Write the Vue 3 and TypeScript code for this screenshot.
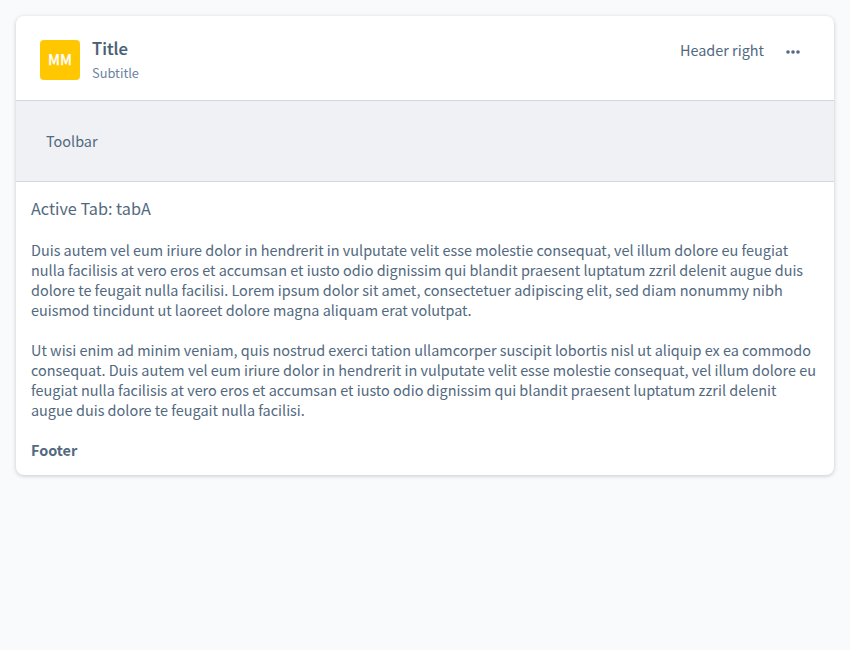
<script setup lang="ts">
import { ref } from 'vue'

const activeTab = ref<string>('tabA')
const paragraphs: string[] = [
  'Duis autem vel eum iriure dolor in hendrerit in vulputate velit esse molestie consequat, vel illum dolore eu feugiat nulla facilisis at vero eros et accumsan et iusto odio dignissim qui blandit praesent luptatum zzril delenit augue duis dolore te feugait nulla facilisi. Lorem ipsum dolor sit amet, consectetuer adipiscing elit, sed diam nonummy nibh euismod tincidunt ut laoreet dolore magna aliquam erat volutpat.',
  'Ut wisi enim ad minim veniam, quis nostrud exerci tation ullamcorper suscipit lobortis nisl ut aliquip ex ea commodo consequat. Duis autem vel eum iriure dolor in hendrerit in vulputate velit esse molestie consequat, vel illum dolore eu feugiat nulla facilisis at vero eros et accumsan et iusto odio dignissim qui blandit praesent luptatum zzril delenit augue duis dolore te feugait nulla facilisi.',
]
</script>

<template>
  <main class="page">
    <section class="card">
      <header class="header">
        <div class="avatar">MM</div>
        <div class="titles">
          <h2 class="title">Title</h2>
          <div class="subtitle">Subtitle</div>
        </div>
        <div class="right">Header right</div>
        <button class="menu" aria-label="More">
          <svg width="14" height="4" viewBox="0 0 14 4" fill="currentColor">
            <circle cx="2" cy="2" r="1.8" />
            <circle cx="7" cy="2" r="1.8" />
            <circle cx="12" cy="2" r="1.8" />
          </svg>
        </button>
      </header>
      <div class="toolbar">Toolbar</div>
      <div class="body">
        <h3 class="tab">Active Tab: {{ activeTab }}</h3>
        <p v-for="(text, i) in paragraphs" :key="i">{{ text }}</p>
        <strong class="footer">Footer</strong>
      </div>
    </section>
  </main>
</template>

<style>
body {
  background: #f9fafc;
}
</style>

<style scoped>
.page {
  padding: 16px;
  color: #526980;
  font: 400 14.43px/20px 'Noto Sans CJK SC', sans-serif;
}
.card {
  background: #fff;
  border-radius: 8px;
  overflow: hidden;
  box-shadow: 0 1px 4px rgba(0, 0, 0, 0.2);
}
.header {
  display: flex;
  box-sizing: border-box;
  height: 84px;
  padding: 24px 24px 0;
}
.avatar {
  box-sizing: border-box;
  width: 40px;
  height: 40px;
  border-radius: 4px;
  background: #ffc700;
  color: #fff;
  font-size: 14.5px;
  font-weight: 500;
  line-height: 38px;
  text-align: center;
  -webkit-text-stroke: 0.25px currentColor;
}
.titles {
  margin-left: 12px;
}
.title {
  margin: 0;
  color: #475e75;
  font-size: 16.6px;
  font-weight: 500;
  line-height: 17px;
  -webkit-text-stroke: 0.2px currentColor;
}
.subtitle {
  margin-top: 6px;
  color: #6c839f;
  font-size: 12.8px;
  line-height: 20px;
}
.right {
  margin-left: auto;
}
.menu {
  display: flex;
  justify-content: center;
  width: 26px;
  height: 24px;
  margin: 0 4px 0 16px;
  padding: 10px 0 0;
  border: 0;
  background: none;
  color: inherit;
}
.toolbar {
  padding: 30px;
  border: solid #d0d7df;
  border-width: 1px 0;
  background: #f0f1f5;
}
.body {
  padding: 15px;
}
.tab {
  margin: 0 0 20px;
  font-size: 16.2px;
  font-weight: 400;
  line-height: 23px;
}
p {
  margin: 0 0 20px;
}
.footer {
  display: block;
}
</style>
